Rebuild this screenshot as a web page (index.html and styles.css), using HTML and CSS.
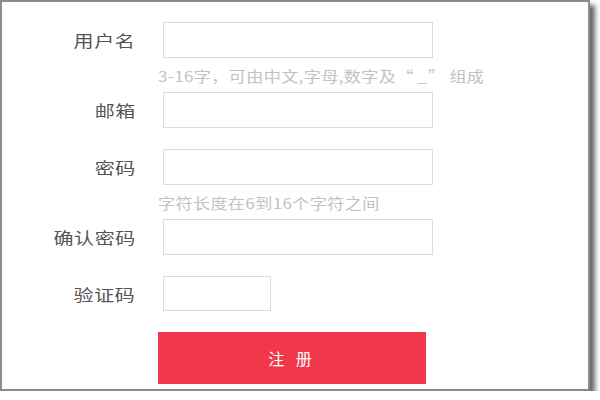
FILE: index.html
```html
<!DOCTYPE html>
<html lang="zh-CN">
<head>
<meta charset="utf-8">
<title>注册</title>
<link rel="stylesheet" href="styles.css">
</head>
<body>
<div class="frame">
  <form class="form">
    <div class="row">
      <label class="label"><span class="label-text">用户名</span></label>
      <input class="input" type="text">
    </div>
    <div class="hint"><span class="hint-text">3-16字，可由中文,字母,数字及“ _” 组成</span></div>
    <div class="row">
      <label class="label"><span class="label-text">邮箱</span></label>
      <input class="input" type="text">
    </div>
    <div class="row gap">
      <label class="label"><span class="label-text">密码</span></label>
      <input class="input" type="password">
    </div>
    <div class="hint"><span class="hint-text">字符长度在6到16个字符之间</span></div>
    <div class="row">
      <label class="label"><span class="label-text">确认密码</span></label>
      <input class="input" type="password">
    </div>
    <div class="row gap short">
      <label class="label"><span class="label-text">验证码</span></label>
      <input class="input small" type="text">
    </div>
    <button class="submit" type="button">注 册</button>
  </form>
</div>
</body>
</html>
```

FILE: styles.css
```css
html, body {
  margin: 0;
  padding: 0;
  background: #ffffff;
}
body {
  font-family: "Noto Sans CJK SC", "Noto Sans", sans-serif;
}
.frame {
  box-sizing: border-box;
  width: 590px;
  height: 391px;
  border: 2px solid #8c8c8c;
  background: #ffffff;
  box-shadow: 5px 5px 5px rgba(0, 0, 0, 0.6);
}
.form {
  display: flex;
  flex-direction: column;
  padding-top: 20px;
}
.row {
  display: flex;
  align-items: center;
  height: 36px;
}
.row.short {
  height: 35px;
}
.row.gap {
  margin-top: 21px;
}
.label {
  width: 134px;
  text-align: right;
  margin-right: 27px;
}
.label-text {
  display: inline-block;
  font-size: 16px;
  letter-spacing: 0.5px;
  color: #555555;
  transform: scaleX(1.25);
  transform-origin: right center;
}
.input {
  box-sizing: border-box;
  width: 270px;
  height: 36px;
  border: 1px solid #dcdcdc;
  background: #ffffff;
  margin: 0;
  padding: 0 8px;
  outline: none;
}
.input.small {
  width: 108px;
  height: 35px;
}
.hint {
  height: 34px;
  line-height: 34px;
  margin-left: 156px;
  white-space: nowrap;
}
.hint-text {
  display: inline-block;
  font-size: 14.5px;
  letter-spacing: 0.3px;
  color: #c2c2c2;
  transform: scaleX(1.18);
  transform-origin: left center;
}
.submit {
  margin-top: 21px;
  margin-left: 156px;
  width: 268px;
  height: 52px;
  border: none;
  background: #f0384a;
  color: #ffffff;
  font-family: "Noto Sans CJK SC", "Noto Sans", sans-serif;
  font-size: 16px;
  letter-spacing: 4px;
  padding: 0;
}
```
